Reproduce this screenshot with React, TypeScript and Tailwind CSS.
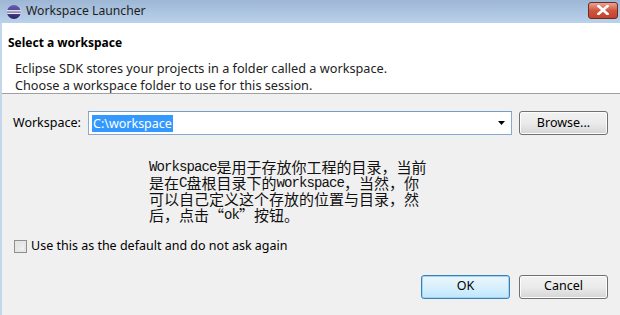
import React from 'react';

function EclipseIcon() {
  return (
    <svg width="16" height="16" viewBox="0 0 16 16">
      <defs>
        <linearGradient id="eg" x1="0" y1="0" x2="0" y2="1">
          <stop offset="0" stopColor="#6a5fb0" />
          <stop offset="1" stopColor="#2c2466" />
        </linearGradient>
      </defs>
      <circle cx="8" cy="8" r="7" fill="url(#eg)" />
      <rect x="1" y="6.2" width="14" height="1.3" fill="#ffffff" />
      <rect x="1.2" y="8.6" width="13.6" height="1.3" fill="#ffffff" />
      <path d="M9 1.3 A6.8 6.8 0 0 1 9 14.7 A5.6 5.6 0 0 0 9 1.3 Z" fill="#d8d0f0" opacity="0.7" />
    </svg>
  );
}

function Btn({ label, primary }: { label: string; primary?: boolean }) {
  return (
    <button
      className={
        'w-[89px] h-[24px] rounded-[3px] text-[12.5px] text-black flex items-center justify-center ' +
        (primary
          ? 'border border-[#3c7fb1] bg-gradient-to-b from-[#eaf6fd] via-[#d9f0fc] to-[#bee6fd] shadow-[inset_0_0_0_1px_#9fd6f5]'
          : 'border border-[#707070] bg-gradient-to-b from-[#f2f2f2] via-[#ebebeb] to-[#d5d5d5] shadow-[inset_0_0_0_1px_#fcfcfc]')
      }
    >
      {label}
    </button>
  );
}

// latin runs inside the chinese note are monospaced, like SimSun
function M({ children }: { children: React.ReactNode }) {
  return (
    <span
      className="inline-block h-[16px] text-[14px] leading-[16px] tracking-[-0.9px] align-top"
      style={{ fontFamily: '"Liberation Mono", monospace' }}
    >
      {children}
    </span>
  );
}

export default function App() {
  return (
    <div
      className="w-[620px] h-[315px] overflow-hidden bg-[#f0f0f0] flex flex-col text-black"
      style={{ fontFamily: '"Noto Sans", "Noto Sans CJK SC", sans-serif' }}
    >
      {/* title bar */}
      <div className="h-[23px] shrink-0 flex items-center pl-[6px] pr-[2px] bg-gradient-to-b from-[#9db6d4] to-[#bad2eb]">
        <EclipseIcon />
        <span className="ml-[4px] text-[12.2px] text-[#1e1e1e]">Workspace Launcher</span>
        <div className="ml-auto mt-[-3px] w-[30px] h-[17px] rounded-[3px] border border-[#6b2a22] bg-gradient-to-b from-[#e8a493] via-[#d0553f] to-[#c2432c] flex items-center justify-center">
          <svg width="12" height="10" viewBox="0 0 12 10">
            <path d="M1.5 1 L10.5 9 M10.5 1 L1.5 9" stroke="#ffffff" strokeWidth="2.6" strokeLinecap="square" />
          </svg>
        </div>
      </div>

      <div className="flex-1 flex flex-col border-l-2 border-[#c4d6ea]">
        {/* header */}
        <div className="h-[71px] shrink-0 bg-white border-b border-[#a0a0a0] pl-[6px] pt-[11px]">
          <div className="text-[12px] font-bold leading-[17px]">Select a workspace</div>
          <div className="pl-[7px] mt-[9px] text-[12.7px] leading-[17px] text-[#222]">
            <div>Eclipse SDK stores your projects in a folder called a workspace.</div>
            <div>Choose a workspace folder to use for this session.</div>
          </div>
        </div>

        {/* body */}
        <div className="flex flex-col pl-[11px] pr-[12px]">
          <div className="mt-[17px] flex items-center">
            <span className="text-[12.5px] w-[75px]">Workspace:</span>
            <div className="w-[424px] h-[24px] bg-white border border-[#8aa9d0] border-t-[#7a9bc4] flex items-center pl-[3px] pr-[6px]">
              <span className="bg-[#3399ff] text-white text-[12.5px] leading-[17px] px-[1px]">C:\workspace</span>
              <svg className="ml-auto" width="7" height="4" viewBox="0 0 7 4">
                <path d="M0 0 H7 L3.5 4 Z" fill="#000" />
              </svg>
            </div>
            <div className="ml-[7px]">
              <Btn label="Browse..." />
            </div>
          </div>

          <div
            className="mt-[24px] ml-[136px] text-[15px] leading-[16px] text-[#111]"
            style={{ fontFamily: '"Noto Sans CJK SC", sans-serif' }}
          >
            <div className="h-[16px]"><M>Workspace</M>是用于存放你工程的目录，当前</div>
            <div className="h-[16px]">是在<M>C</M>盘根目录下的<M>workspace</M>，当然，你</div>
            <div className="h-[16px]">可以自己定义这个存放的位置与目录，然</div>
            <div className="h-[16px]">后，点击“<M>ok</M>”按钮。</div>
          </div>

          <div className="mt-[14px] flex items-center">
            <div className="ml-[1px] w-[13px] h-[13px] border border-[#8f8f8f] bg-gradient-to-br from-[#dcdcdc] to-[#f8f8f8] shadow-[inset_0_0_0_2px_#e6e6e6]" />
            <span className="ml-[4px] text-[12.5px]">Use this as the default and do not ask again</span>
          </div>

          <div className="mt-[19px] flex justify-end gap-[9px]">
            <Btn label="OK" primary />
            <Btn label="Cancel" />
          </div>
        </div>
      </div>
    </div>
  );
}
